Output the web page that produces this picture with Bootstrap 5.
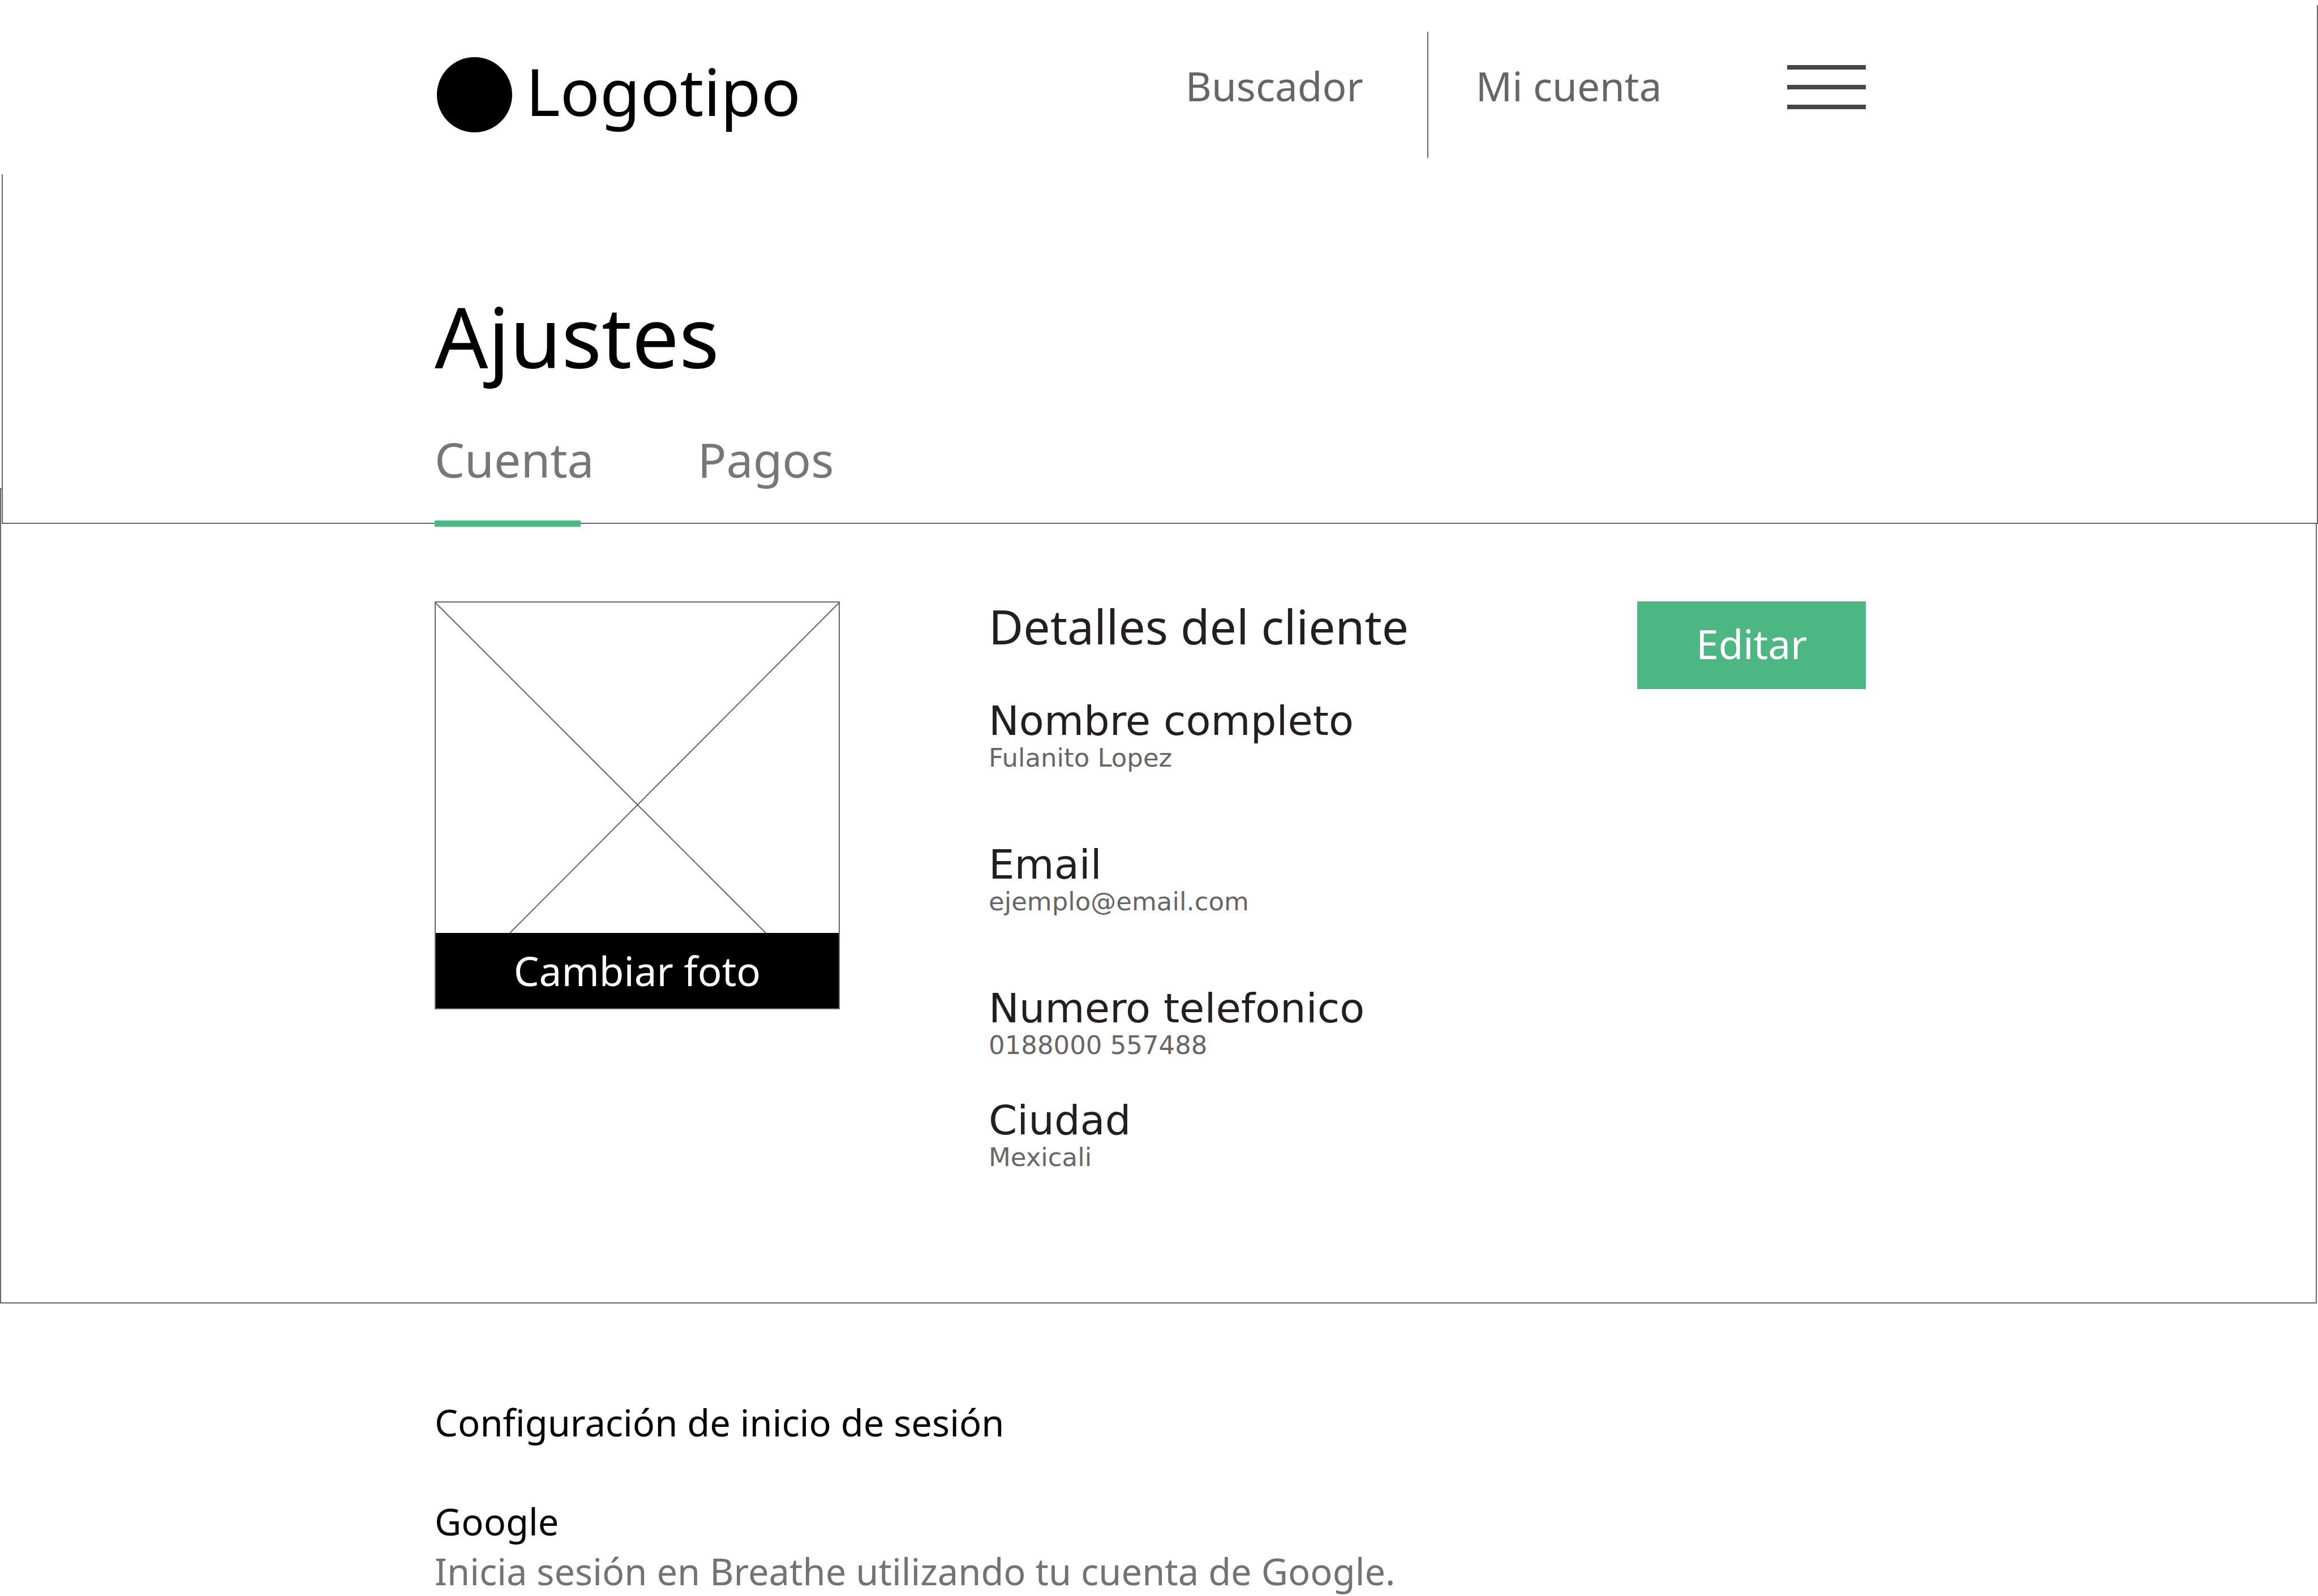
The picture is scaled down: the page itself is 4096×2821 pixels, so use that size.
<!DOCTYPE html>
<html lang="es">
<head>
<meta charset="utf-8">
<meta name="viewport" content="width=device-width, initial-scale=1">
<title>Ajustes</title>
<link href="https://cdn.jsdelivr.net/npm/bootstrap@5.3.0/dist/css/bootstrap.min.css" rel="stylesheet">
<style>
:root { --line: #666; --brand: #4db783; --start: 18.75vw; --end: 19.5vw; }
body { font-family: "Noto Sans", "Open Sans", sans-serif; color: #000; background: #fff; overflow-x: hidden; }
a { text-decoration: none; }
.gutters { padding-left: var(--start); padding-right: var(--end); }

/* Upper block: top bar and page title */
.top-block { margin-top: 9px; border-right: 2px solid var(--line); }
.top-bar { padding-top: 47px; padding-bottom: 29px; padding-right: calc(var(--end) - 2px); }
.bar-row { min-height: 223px; }
.brand-link { gap: 24px; margin-left: 4px; color: #000; }
.brand-dot { width: 133px; height: 133px; }
.brand-name { font-size: 116px; line-height: 140px; padding-bottom: 16px; }
.bar-link { font-size: 71px; line-height: 80px; color: var(--line); padding-bottom: 32px; }
.bar-rule { width: 2px; background: var(--line); margin-left: 113px; margin-right: 84px; }
.menu-btn { width: 139px; margin-left: 222px; }

.title-box { margin-left: 3px; padding: 197px calc(var(--end) - 2px) 0 calc(var(--start) - 5px); border-left: 2px solid var(--line); border-bottom: 2px solid var(--line); background: #fff; }
.page-title { font-size: 148px; line-height: 178px; font-weight: 400; margin-bottom: 79px; }
.tab-list { gap: 183px; margin-bottom: -7px; }
.tab-link { display: block; font-size: 84px; line-height: 100px; color: #777; }
.tab-link::after { content: ""; display: block; width: 258px; height: 11px; margin-top: 58px; }
.tab-link.active::after { background: var(--brand); }

/* Customer details */
.detail-box { margin: -63px 2px 0 0; padding: 198px calc(var(--end) - 4px) 224px calc(var(--start) - 2px); border: 2px solid var(--line); }
.photo-box { width: 716px; height: 721px; border: 2px solid var(--line); }
.photo-btn { height: 133px; background: #000; color: #fff; }
.action-text { font-size: 71px; line-height: 80px; }
.detail-col { margin-left: 263px; color: #231f20; }
.detail-title { font-size: 84px; line-height: 88px; font-weight: 400; margin-bottom: 89px; }
.detail-item { margin-bottom: 122px; font-family: "DejaVu Sans", sans-serif; }
.detail-item.tight { margin-bottom: 66px; }
.detail-item:last-child { margin-bottom: 0; }
.detail-item dt { font-size: 72px; line-height: 68px; font-weight: 400; }
.detail-item dd { font-size: 45px; line-height: 64px; color: var(--line); }
.edit-btn { width: 404px; height: 155px; background: var(--brand); color: #fff; padding-bottom: 6px; }

/* Sign-in settings */
.login-box { padding-top: 166px; font-size: 65px; line-height: 88px; }
.login-title { font-size: 65px; line-height: 88px; font-weight: 400; margin-bottom: 87px; }
.login-name { font-size: 65px; line-height: 88px; font-weight: 400; }
.login-note { color: #737373; }
</style>
</head>
<body>
<div class="top-block position-relative z-1">
  <header class="top-bar gutters">
    <div class="bar-row d-flex align-items-center">
      <a href="#" class="brand-link d-flex align-items-center">
        <svg class="brand-dot" viewBox="0 0 133 133" aria-hidden="true"><circle cx="66.5" cy="66.5" r="66.5"/></svg>
        <span class="brand-name">Logotipo</span>
      </a>
      <nav class="d-flex align-items-center align-self-stretch ms-auto" aria-label="Principal">
        <a href="#" class="bar-link">Buscador</a>
        <div class="bar-rule align-self-stretch"></div>
        <a href="#" class="bar-link">Mi cuenta</a>
        <button type="button" class="menu-btn border-0 bg-transparent p-0" aria-label="Menú">
          <svg class="d-block" width="139" height="105" viewBox="0 0 139 105" fill="#464646" aria-hidden="true"><rect width="139" height="8"/><rect y="35" width="139" height="8"/><rect y="70" width="139" height="8"/></svg>
        </button>
      </nav>
    </div>
  </header>
  <section class="title-box">
    <h1 class="page-title">Ajustes</h1>
    <ul class="tab-list list-unstyled d-flex">
      <li><a href="#" class="tab-link active" aria-current="page">Cuenta</a></li>
      <li><a href="#" class="tab-link">Pagos</a></li>
    </ul>
  </section>
</div>

<main>
  <section class="detail-box d-flex align-items-start">
    <div class="photo-box d-flex flex-column flex-shrink-0">
      <svg class="flex-fill w-100" viewBox="0 0 712 584" preserveAspectRatio="none" stroke="#666" stroke-width="2" aria-hidden="true"><path d="M0 1L583 584M712 1L131 584"/></svg>
      <button type="button" class="photo-btn action-text btn rounded-0 border-0 p-0">Cambiar foto</button>
    </div>
    <div class="detail-col">
      <h2 class="detail-title">Detalles del cliente</h2>
      <dl class="mb-0">
        <div class="detail-item"><dt>Nombre completo</dt><dd class="mb-0">Fulanito Lopez</dd></div>
        <div class="detail-item"><dt>Email</dt><dd class="mb-0">ejemplo@email.com</dd></div>
        <div class="detail-item tight"><dt>Numero telefonico</dt><dd class="mb-0">0188000 557488</dd></div>
        <div class="detail-item"><dt>Ciudad</dt><dd class="mb-0">Mexicali</dd></div>
      </dl>
    </div>
    <button type="button" class="edit-btn action-text btn rounded-0 border-0 pt-0 ms-auto">Editar</button>
  </section>

  <section class="login-box gutters">
    <h2 class="login-title">Configuración de inicio de sesión</h2>
    <h3 class="login-name mb-0">Google</h3>
    <p class="login-note mb-0">Inicia sesión en Breathe utilizando tu cuenta de Google.</p>
  </section>
</main>
<script src="https://cdn.jsdelivr.net/npm/bootstrap@5.3.0/dist/js/bootstrap.bundle.min.js"></script>
</body>
</html>
